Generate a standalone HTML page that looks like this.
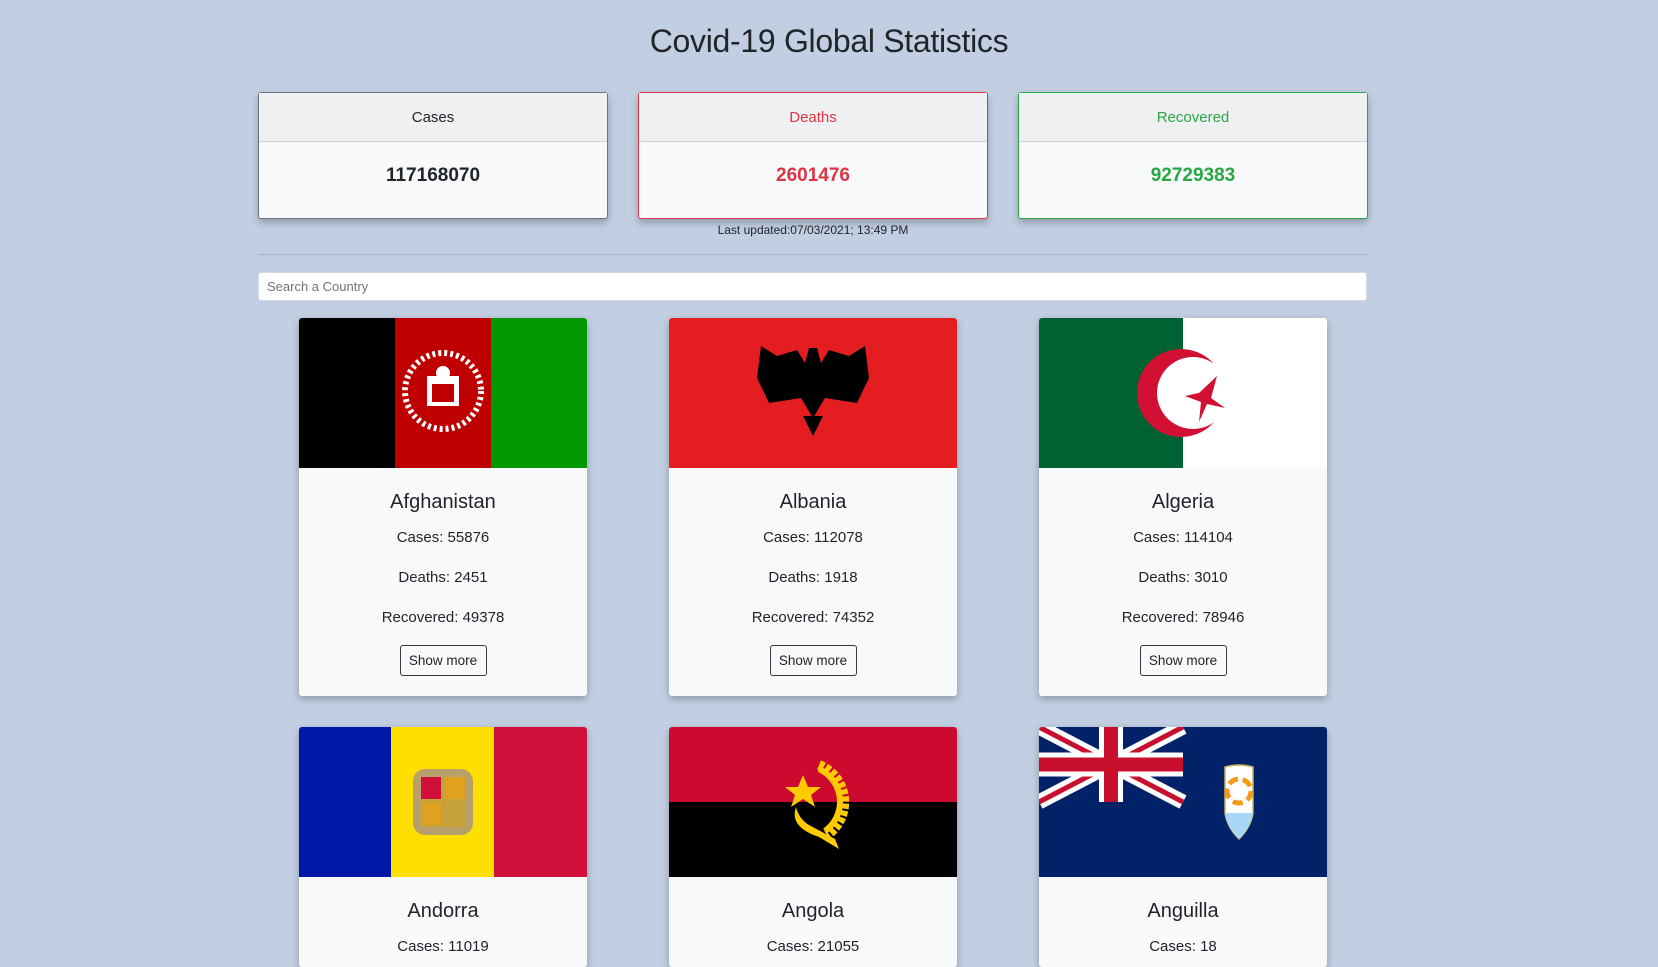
<!DOCTYPE html>
<html><head><meta charset="utf-8"><style>
*{box-sizing:border-box;margin:0;padding:0}
body{width:1658px;height:957px;overflow:hidden;background:#c2cfe3;font-family:"Liberation Sans",sans-serif;color:#212529;position:relative}
h1{position:absolute;top:23px;left:0;width:100%;text-align:center;font-size:32px;font-weight:400;letter-spacing:-0.3px}
.stat{position:absolute;top:92px;width:350px;height:127px;background:#f8f9fa;border:1px solid #6c757d;border-radius:3px;box-shadow:0 4px 8px rgba(0,0,0,.25);text-align:center}
.stat .h{height:49px;background:#eff0f2;border-bottom:1px solid #cfd2d6;line-height:49px;font-size:15px}
.stat .v{line-height:68px;font-size:19px;font-weight:700}
.upd{position:absolute;top:223px;left:0;width:1626px;text-align:center;font-size:12px}
.hr{position:absolute;top:254px;left:258px;width:1109px;height:1px;background:#a8b5c9}
.search{position:absolute;top:272px;left:258px;width:1109px;height:29px;background:#fff;border:1px solid #d5dbe3;border-radius:3px;font-size:13px;color:#6c757d;line-height:27px;padding-left:8px}
.card{position:absolute;width:288px;height:378px;background:#f8f9fa;border-radius:3px;box-shadow:0 3px 8px rgba(0,0,0,.28);overflow:hidden;text-align:center}
.card svg{display:block;width:288px;height:150px}
.card .n{font-size:20px;margin-top:23px;height:37px}
.card p{font-size:15px;height:40px;line-height:20px}
.card .b{display:inline-block;border:1px solid #343a40;border-radius:3px;width:87px;height:31px;line-height:29px;font-size:13.5px;margin-top:-3px}
</style></head><body>
<h1>Covid-19 Global Statistics</h1>
<div class="stat" style="left:258px"><div class="h">Cases</div><div class="v">117168070</div></div>
<div class="stat" style="left:638px;border-color:#dc3545"><div class="h" style="color:#dc3545">Deaths</div><div class="v" style="color:#dc3545">2601476</div></div>
<div class="stat" style="left:1018px;border-color:#28a745"><div class="h" style="color:#28a745">Recovered</div><div class="v" style="color:#28a745">92729383</div></div>
<div class="upd">Last updated:07/03/2021; 13:49 PM</div>
<div class="hr"></div>
<div class="search">Search a Country</div>

<div class="card" style="left:299px;top:318px">
<svg viewBox="0 0 288 150"><rect width="96" height="150" fill="#000"/><rect x="96" width="96" height="150" fill="#be0000"/><rect x="192" width="96" height="150" fill="#009900"/><circle cx="144" cy="73" r="38" fill="none" stroke="#fff" stroke-width="6" stroke-dasharray="3 3"/><rect x="128" y="58" width="32" height="30" fill="#fff"/><rect x="133" y="66" width="22" height="18" fill="#be0000"/><circle cx="144" cy="55" r="7" fill="#fff"/></svg>
<div class="n">Afghanistan</div><p>Cases: 55876</p><p>Deaths: 2451</p><p>Recovered: 49378</p><span class="b">Show more</span></div>

<div class="card" style="left:669px;top:318px">
<svg viewBox="0 0 288 150"><rect width="288" height="150" fill="#e41e20"/><path d="M144 100 L132 80 L100 85 L88 60 L92 28 L108 38 L128 32 L136 45 L140 30 L148 30 L152 45 L160 32 L180 38 L196 28 L200 60 L188 85 L156 80 Z M144 118 L134 98 L154 98Z" fill="#000"/></svg>
<div class="n">Albania</div><p>Cases: 112078</p><p>Deaths: 1918</p><p>Recovered: 74352</p><span class="b">Show more</span></div>

<div class="card" style="left:1039px;top:318px">
<svg viewBox="0 0 288 150"><rect width="144" height="150" fill="#006233"/><rect x="144" width="144" height="150" fill="#fff"/><circle cx="142" cy="75" r="44" fill="#d21034"/><circle cx="154" cy="75" r="36" fill="#fff"/><polygon points="160,75 178,58 172,80 186,90 168,86 160,104 162,84 146,78 164,74" fill="#d21034"/></svg>
<div class="n">Algeria</div><p>Cases: 114104</p><p>Deaths: 3010</p><p>Recovered: 78946</p><span class="b">Show more</span></div>

<div class="card" style="left:299px;top:727px;height:240px">
<svg viewBox="0 0 288 150"><rect width="92" height="150" fill="#0018a8"/><rect x="92" width="103" height="150" fill="#fedf00"/><rect x="195" width="93" height="150" fill="#d0103a"/><rect x="114" y="42" width="60" height="66" rx="12" fill="#b8a06a"/><rect x="122" y="50" width="44" height="50" fill="#c7a33a"/><rect x="122" y="50" width="20" height="22" fill="#d0103a"/><rect x="146" y="50" width="20" height="22" fill="#e0a020"/><rect x="122" y="76" width="20" height="22" fill="#e0a020"/></svg>
<div class="n">Andorra</div><p>Cases: 11019</p></div>

<div class="card" style="left:669px;top:727px;height:240px">
<svg viewBox="0 0 288 150"><rect width="288" height="75" fill="#cc092f"/><rect y="75" width="288" height="75" fill="#000"/><path d="M150 38 A40 40 0 0 1 158 108" fill="none" stroke="#ffcb00" stroke-width="10" stroke-dasharray="5 2"/><path d="M150 42 A36 36 0 0 1 156 104" fill="none" stroke="#ffcb00" stroke-width="6"/><polygon points="134,48 139,60 152,60 142,68 146,80 134,72 122,80 126,68 116,60 129,60" fill="#ffcb00"/><path d="M127 80 Q120 100 150 110 L170 122 L166 112 L140 98 Q130 92 127 80Z" fill="#ffcb00"/></svg>
<div class="n">Angola</div><p>Cases: 21055</p></div>

<div class="card" style="left:1039px;top:727px;height:240px">
<svg viewBox="0 0 288 150"><rect width="288" height="150" fill="#012169"/><g><rect width="144" height="75" fill="#012169"/><path d="M0 0L144 75M144 0L0 75" stroke="#fff" stroke-width="15"/><path d="M0 0L144 75M144 0L0 75" stroke="#c8102e" stroke-width="5"/><path d="M72 0V75M0 37.5H144" stroke="#fff" stroke-width="24"/><path d="M72 0V75M0 37.5H144" stroke="#c8102e" stroke-width="14"/></g><path d="M186 40 Q200 36 214 40 L214 86 Q212 100 200 112 Q188 100 186 86Z" fill="#fff" stroke="#c8b060" stroke-width="1.5"/><path d="M186 86 H214 Q212 100 200 112 Q188 100 186 86Z" fill="#a8d8f8"/><circle cx="200" cy="64" r="12" fill="none" stroke="#f59a1a" stroke-width="5" stroke-dasharray="10 5"/></svg>
<div class="n">Anguilla</div><p>Cases: 18</p></div>
</body></html>
